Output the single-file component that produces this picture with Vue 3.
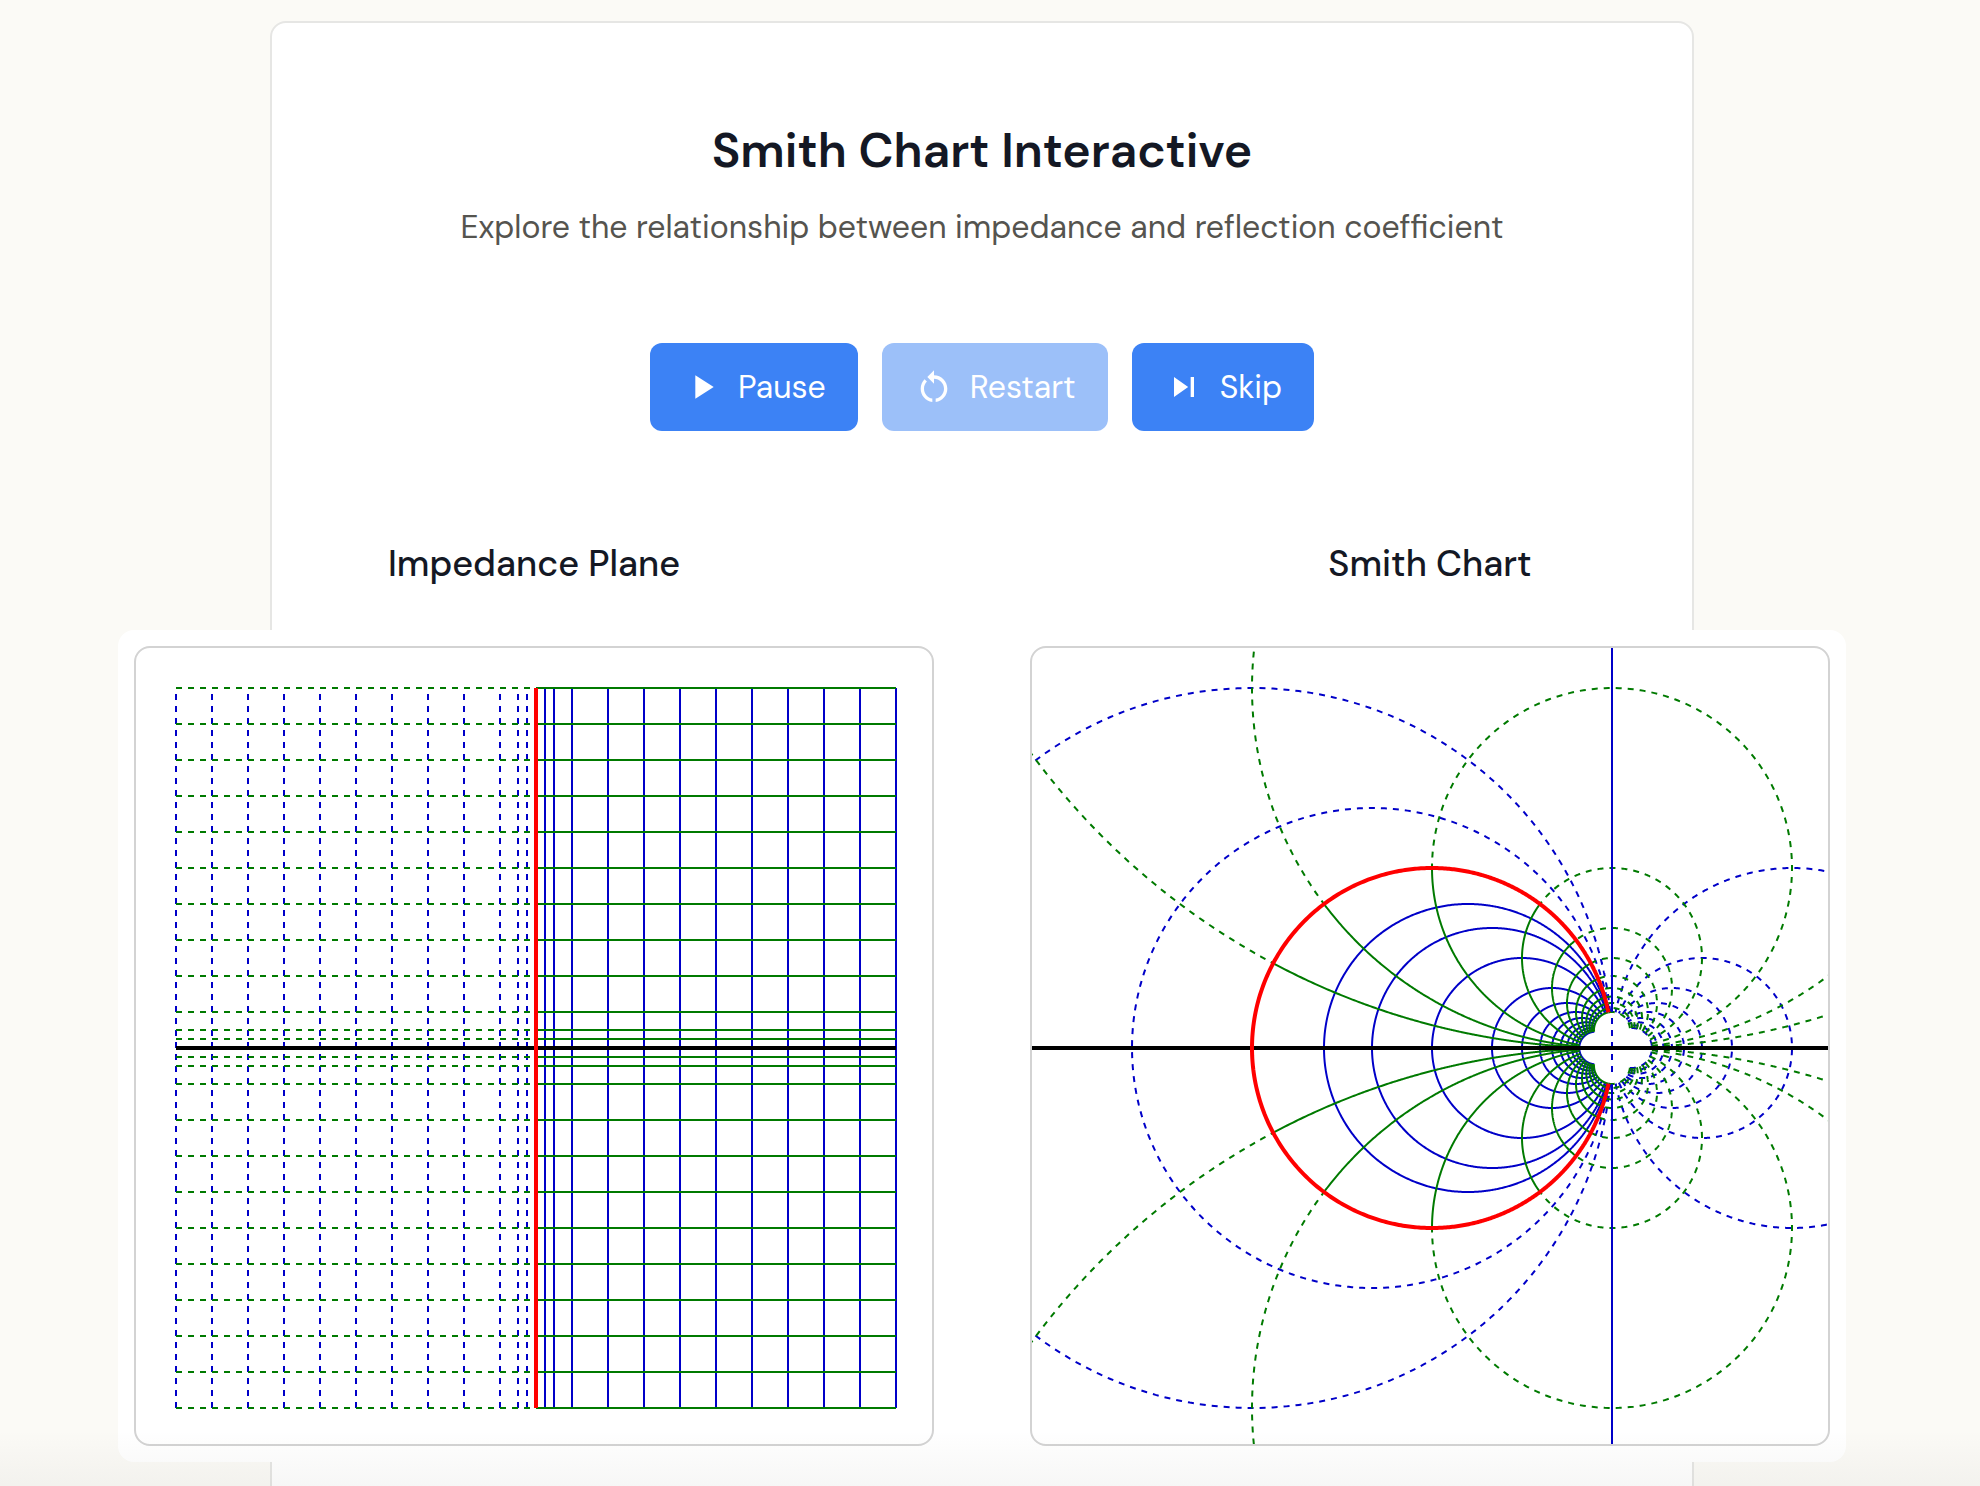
<script setup>
const SIZE = 800
const MID = SIZE / 2
const steps = [0.25, 0.5, 1, 2, 3, 4, 5, 6, 7, 8, 9, 10]
const values = [...steps.map((v) => -v).reverse(), ...steps]

const plane = (r, x) => [MID + 36 * r, MID - 36 * x]

// Reflection coefficient: (z - 1) / (z + 1)
const smith = (r, x) => {
  const d = (r + 1) * (r + 1) + x * x || 1e-9
  return [MID + (180 * (r * r - 1 + x * x)) / d, MID - (180 * 2 * x) / d]
}

function trace(map, from, to, count) {
  const points = []
  for (let i = 0; i <= count; i++) {
    const t = i / count
    const [px, py] = map(from[0] + (to[0] - from[0]) * t, from[1] + (to[1] - from[1]) * t)
    points.push(px.toFixed(2) + ',' + py.toFixed(2))
  }
  return points.join(' ')
}

function build(map, count) {
  const lines = []
  for (const v of values) {
    // r = -1 passes through infinity on the Smith chart and is added separately
    if (v === -1 && map === smith) continue
    lines.push({ kind: v < 0 ? 'blue dashed' : 'blue', points: trace(map, [v, -10], [v, 10], count * 2) })
  }
  for (const v of values) {
    lines.push({ kind: 'green dashed', points: trace(map, [-10, v], [0, v], count) })
    lines.push({ kind: 'green', points: trace(map, [0, v], [10, v], count) })
  }
  return lines
}

const planeLines = build(plane, 1)
planeLines.push({ kind: 'black', points: '40,400 760,400' })
planeLines.push({ kind: 'red', points: '400,760 400,40' })

const smithLines = build(smith, 1000)
smithLines.push({ kind: 'blue', points: '580,0 580,364' })
smithLines.push({ kind: 'blue dashed', points: '580,370 580,430' })
smithLines.push({ kind: 'blue', points: '580,436 580,800' })
smithLines.push({ kind: 'black', points: '0,400 800,400' })
smithLines.push({ kind: 'red', points: trace(smith, [0, -10], [0, 10], 2000) })

const charts = [
  { title: 'Impedance Plane', lines: planeLines },
  { title: 'Smith Chart', lines: smithLines },
]
</script>

<template>
  <main class="page">
    <section class="card">
      <header class="intro">
        <h1>Smith Chart Interactive</h1>
        <p>Explore the relationship between impedance and reflection coefficient</p>
      </header>
      <div class="controls">
        <button type="button">
          <svg viewBox="0 0 24 24" aria-hidden="true"><path d="M8 5v14l11-7z" /></svg>
          Pause
        </button>
        <button type="button" disabled>
          <svg viewBox="0 0 24 24" aria-hidden="true"><path d="M12 5V2L8 6l4 4V7c3.31 0 6 2.69 6 6 0 2.97-2.17 5.43-5 5.91v2.02c3.95-.49 7-3.85 7-7.93 0-4.42-3.58-8-8-8zm-6 8c0-1.65.67-3.15 1.76-4.24L6.34 7.34C4.9 8.79 4 10.79 4 13c0 4.08 3.05 7.44 7 7.93v-2.02c-2.83-.48-5-2.94-5-5.91z" /></svg>
          Restart
        </button>
        <button type="button">
          <svg viewBox="0 0 24 24" aria-hidden="true"><path d="M6 18l8.5-6L6 6v12zM16 6v12h2V6h-2z" /></svg>
          Skip
        </button>
      </div>
      <div class="charts">
        <article v-for="chart in charts" :key="chart.title" class="chart">
          <h2>{{ chart.title }}</h2>
          <div class="mat">
            <div class="frame">
              <svg viewBox="0 0 800 800" role="img" :aria-label="chart.title">
                <polyline v-for="(line, i) in chart.lines" :key="i" :class="line.kind" :points="line.points" />
              </svg>
            </div>
          </div>
        </article>
      </div>
    </section>
    <div class="fade"></div>
  </main>
</template>

<style>
body {
  margin: 0;
  background: #fbfaf6;
}
</style>

<style scoped>
.page {
  position: relative;
  height: 100vh;
  overflow: hidden;
  box-sizing: border-box;
  padding: 21px 286px 0 270px;
  font-family: "DM Sans", "Inter", "Open Sans", sans-serif;
  color: #141824;
}
.card {
  box-sizing: border-box;
  padding: 96px 0;
  border: 2px solid #e6e6e4;
  border-radius: 16px;
  background: #fff;
  display: flex;
  flex-direction: column;
  align-items: center;
}
.intro {
  text-align: center;
}
h1 {
  margin: 0;
  font-size: 48px;
  line-height: 64px;
  font-weight: 600;
}
p {
  margin: 20px 0 0;
  font-size: 32px;
  line-height: 48px;
  color: #55544f;
}
.controls {
  display: flex;
  gap: 24px;
  margin-top: 92px;
}
button {
  display: flex;
  align-items: center;
  gap: 16px;
  height: 88px;
  padding: 0 32px;
  border: 0;
  border-radius: 12px;
  background: #3c82f5;
  color: #fff;
  font: 400 32px/48px "DM Sans", "Inter", "Open Sans", sans-serif;
}
button:disabled {
  opacity: 0.5;
}
button svg {
  width: 40px;
  height: 40px;
  fill: currentColor;
}
.charts {
  display: flex;
  gap: 64px;
  margin-top: 104px;
}
.chart {
  display: flex;
  flex-direction: column;
  align-items: center;
}
h2 {
  margin: 0 0 37px;
  font-size: 36px;
  line-height: 58px;
  font-weight: 500;
}
.mat {
  padding: 16px;
  border-radius: 16px;
  background: #fff;
}
.frame {
  box-sizing: border-box;
  width: 800px;
  height: 800px;
  border: 2px solid #d3d3d3;
  border-radius: 16px;
  overflow: hidden;
}
.frame svg {
  display: block;
  width: 800px;
  height: 800px;
}
polyline {
  fill: none;
  stroke-width: 2;
}
.blue {
  stroke: #0000c8;
}
.green {
  stroke: #007a00;
}
.dashed {
  stroke-dasharray: 6 6;
}
.black {
  stroke: #000;
  stroke-width: 4;
}
.red {
  stroke: #f00;
  stroke-width: 4;
}
.fade {
  position: absolute;
  left: 0;
  right: 0;
  bottom: 0;
  height: 56px;
  background: linear-gradient(rgba(40, 40, 30, 0), rgba(40, 40, 30, 0.04));
}
</style>
